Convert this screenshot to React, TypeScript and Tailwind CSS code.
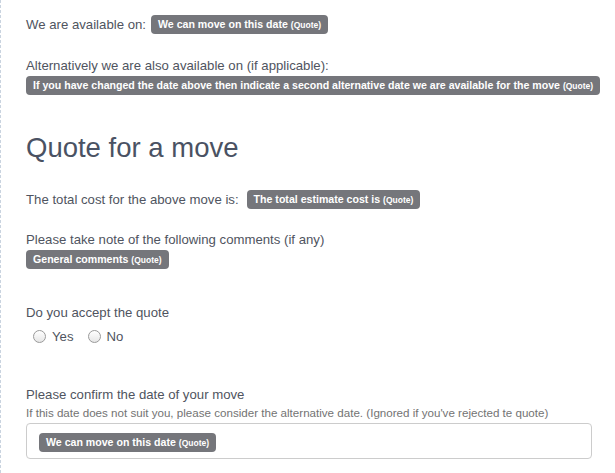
import React from "react";

function Label({ text, className = "" }: { text: string; className?: string }) {
  return (
    <span
      className={
        "inline-block rounded-[4px] bg-[#75767b] px-[7px] pt-[3px] pb-[3px] text-[10.6px] font-bold leading-[12px] text-white whitespace-nowrap " +
        className
      }
    >
      {text} <span className="text-[8.5px]">(Quote)</span>
    </span>
  );
}

function Radio({ label }: { label: string }) {
  return (
    <label className="flex items-center gap-[6px]">
      <span className="h-[13px] w-[13px] rounded-full border border-[#9a9a9a] bg-gradient-to-b from-white to-[#e6e6e6]" />
      <span>{label}</span>
    </label>
  );
}

export default function App() {
  return (
    <div
      className="min-h-[473px] border-l border-dashed border-[#c9d3df] bg-white pl-[25px] pr-[12px] text-[13.2px] text-[#4f5460]"
      style={{ fontFamily: '"Liberation Sans", Arial, sans-serif' }}
    >
      <div className="flex items-center gap-[5px] pt-[15px]">
        <span>We are available on:</span>
        <Label text="We can move on this date" />
      </div>

      <div className="mt-[22px]">
        <div className="leading-[18px]">Alternatively we are also available on (if applicable):</div>
        <Label
          className="mt-[0px]"
          text="If you have changed the date above then indicate a second alternative date we are available for the move"
        />
      </div>

      <h2 className="mt-[37px] text-[27.5px] font-normal leading-[32px] text-[#4a5263]">Quote for a move</h2>

      <div className="mt-[26px] flex items-center gap-[8px]">
        <span>The total cost for the above move is:</span>
        <Label text="The total estimate cost is" />
      </div>

      <div className="mt-[21px]">
        <div className="leading-[18px]">Please take note of the following comments (if any)</div>
        <Label className="mt-[0px]" text="General comments" />
      </div>

      <div className="mt-[35px]">
        <div className="leading-[18px]">Do you accept the quote</div>
        <div className="mt-[5px] flex gap-[14px] pl-[7px]">
          <Radio label="Yes" />
          <Radio label="No" />
        </div>
      </div>

      <div className="mt-[40px]">
        <div className="leading-[18px]">Please confirm the date of your move</div>
        <div className="mt-[1px] text-[11.6px] leading-[15px] text-[#737373]">
          If this date does not suit you, please consider the alternative date. (Ignored if you've rejected te quote)
        </div>
        <div className="mt-[3px] w-[566px] rounded-[4px] border border-[#cccccc] px-[12px] pt-[8px] pb-[6px]">
          <Label text="We can move on this date" />
        </div>
      </div>
    </div>
  );
}
